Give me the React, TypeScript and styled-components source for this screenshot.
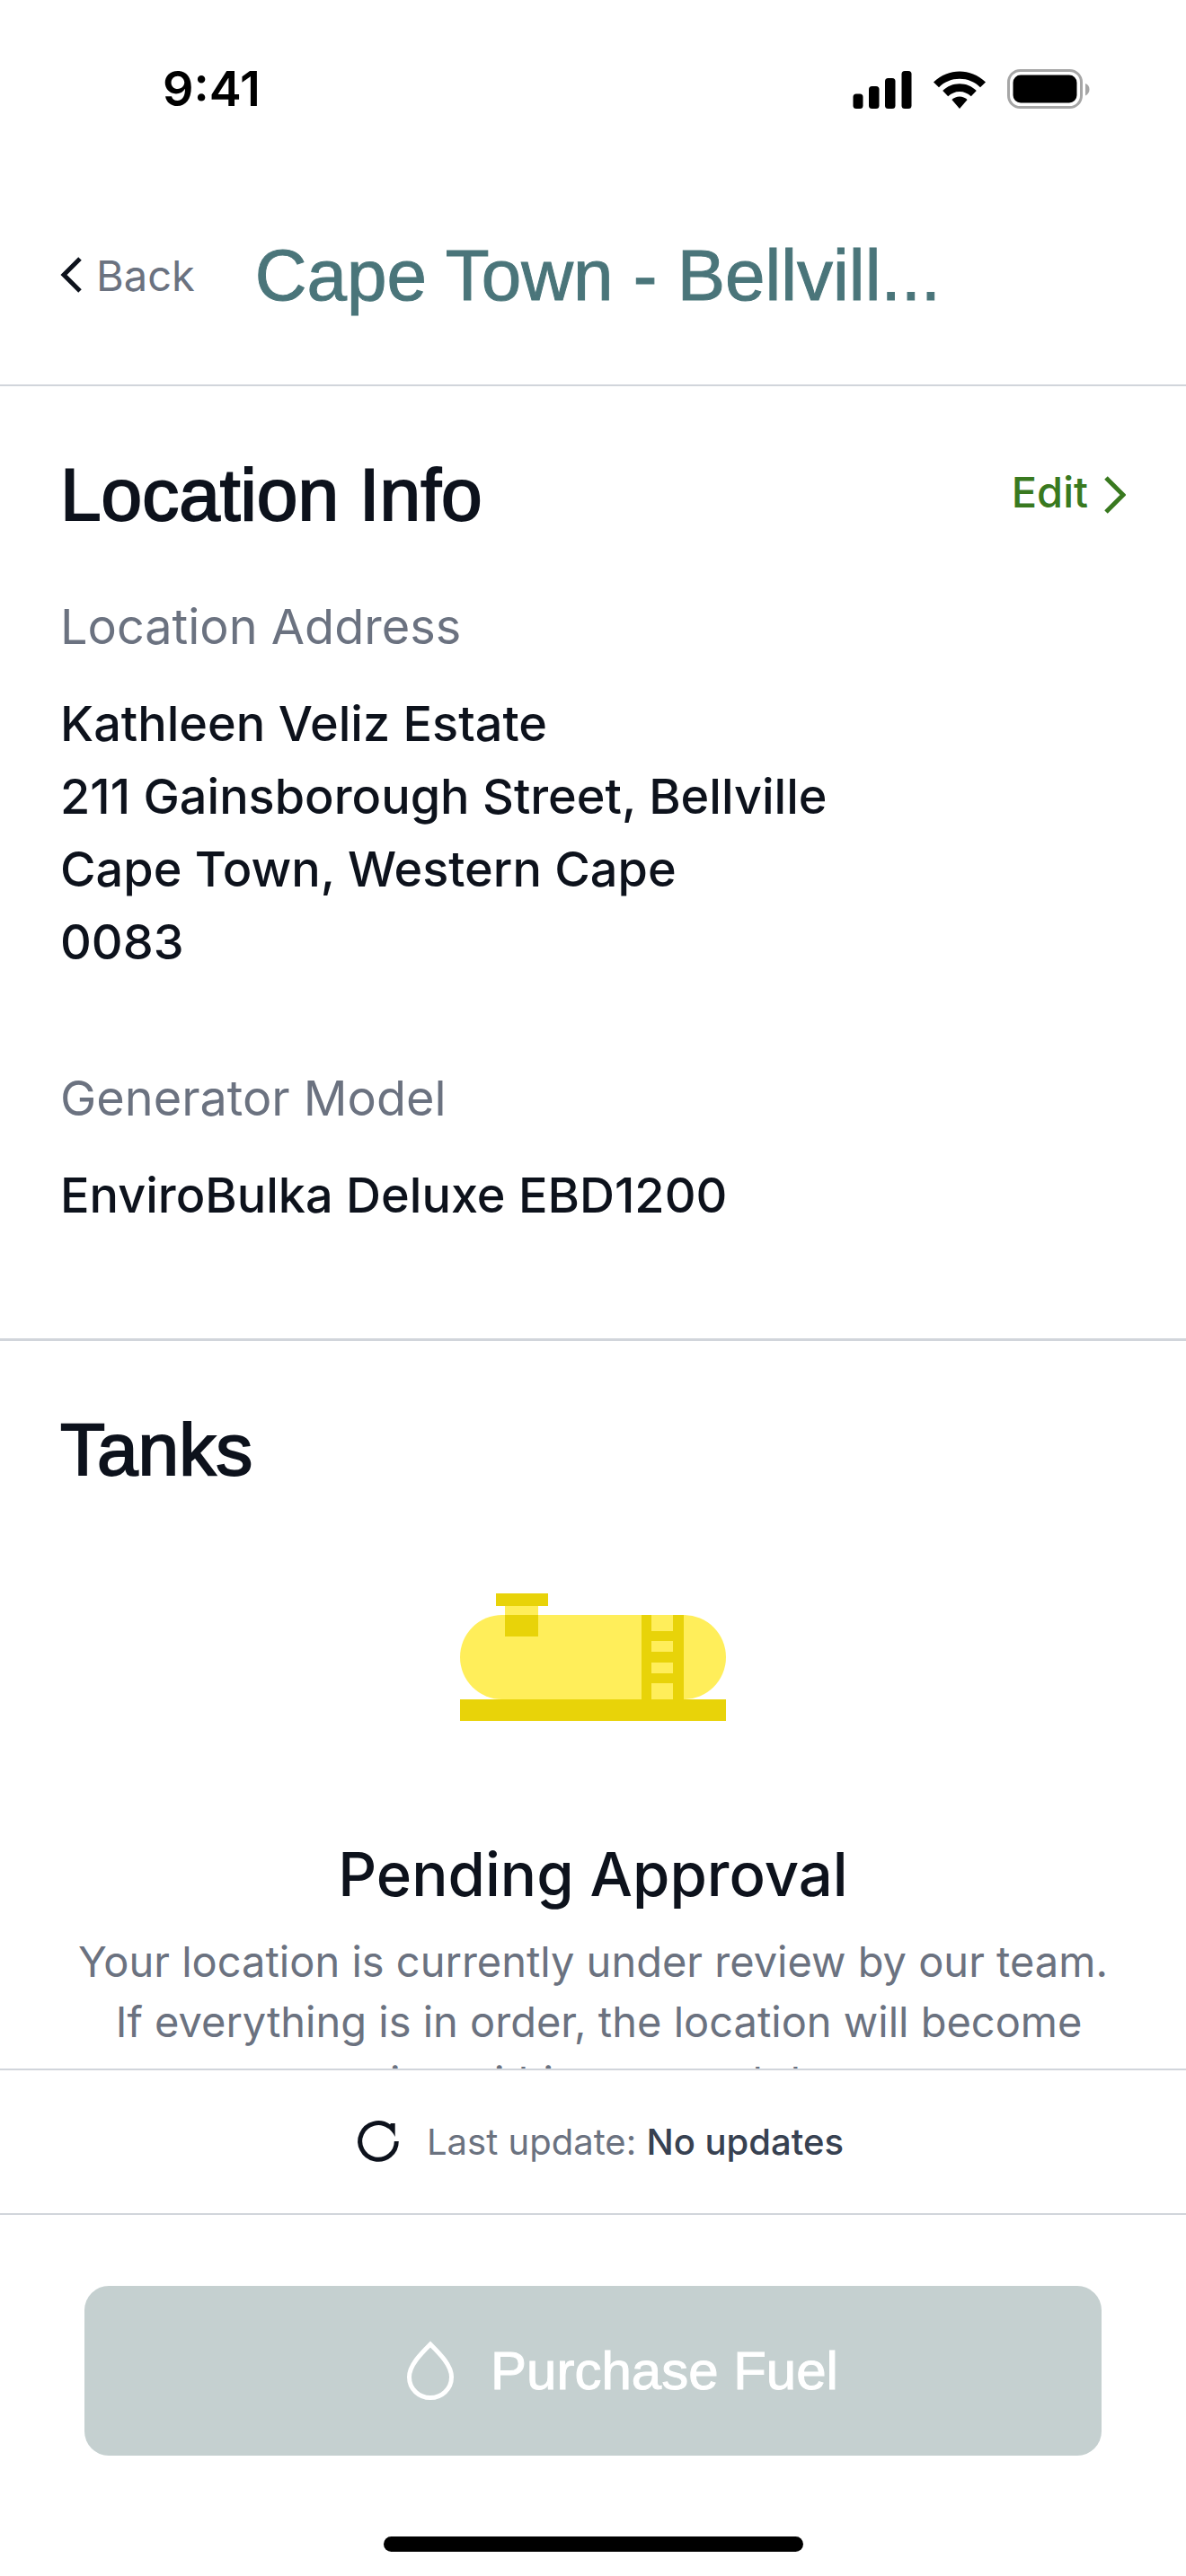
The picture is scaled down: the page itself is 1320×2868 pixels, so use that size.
import React from "react";
import styled, { createGlobalStyle } from "styled-components";

const color = {
  ink: "#0d121c",
  muted: "#6b7280",
  slate: "#374151",
  teal: "#4a757a",
  green: "#39791f",
  line: "#d1d5db",
  disabled: "#c5d0d0",
};

const font = {
  body: `Inter, "Liberation Sans", sans-serif`,
  display: `"Liberation Sans", Arial, sans-serif`,
};

const GlobalStyle = createGlobalStyle`
  *, *::before, *::after { box-sizing: border-box; }
  body { margin: 0; background: #fff; }
  h1, h2, h3, p, dl, dt, dd { margin: 0; font-weight: inherit; }
  button { border: 0; background: none; padding: 0; font: inherit; cursor: pointer; }
`;

const Screen = styled.div`
  display: flex;
  flex-direction: column;
  height: 100vh;
  background: #fff;
  color: ${color.ink};
  font-family: ${font.body};
  font-size: 54px;
  line-height: 81px;
`;

const StatusBar = styled.div`
  display: flex;
  align-items: center;
  justify-content: space-between;
  flex: none;
  padding: 64px 107px 0 181px;
  color: #000;
  font-weight: 600;
  line-height: 70px;
`;

const StatusIcons = styled.div`
  display: flex;
  align-items: center;
  gap: 24px;
`;

const Header = styled.header`
  display: flex;
  align-items: center;
  flex: none;
  gap: 67px;
  padding: 119px 67px 68px;
  border-bottom: 2px solid ${color.line};
`;

const BackLink = styled.a`
  display: flex;
  align-items: center;
  gap: 16px;
  color: ${color.muted};
  font-size: 47px;
  line-height: 67px;
  text-decoration: none;
`;

const Title = styled.h1`
  color: ${color.teal};
  font-family: ${font.display};
  font-size: 80px;
  line-height: 107px;
  white-space: nowrap;
  -webkit-text-stroke: 1px currentColor;
`;

const Content = styled.main`
  flex: 1;
  min-height: 0;
  overflow: hidden;
`;

const Section = styled.section<{ $divided?: boolean }>`
  padding: 67px 67px ${(p) => (p.$divided ? "119px" : "0")};
  border-bottom: ${(p) => (p.$divided ? `3px solid ${color.line}` : "0")};
`;

const SectionHead = styled.div`
  display: flex;
  align-items: center;
  justify-content: space-between;
`;

const SectionTitle = styled.h2`
  font-family: ${font.display};
  font-size: 82px;
  line-height: 107px;
  -webkit-text-stroke: 2px currentColor;
`;

const EditLink = styled.a`
  display: flex;
  align-items: center;
  gap: 18px;
  padding-bottom: 6px;
  color: ${color.green};
  font-size: 47px;
  font-weight: 500;
  line-height: 67px;
  text-decoration: none;
`;

const Details = styled.dl`
  display: grid;
  gap: 93px;
  padding-top: 53px;
`;

const Detail = styled.div`
  display: grid;
  gap: 27px;
`;

const Term = styled.dt`
  color: ${color.muted};
`;

const Value = styled.dd`
  font-weight: 500;
`;

const Empty = styled.div`
  display: flex;
  flex-direction: column;
  align-items: center;
  padding-top: 107px;
  text-align: center;
`;

const EmptyTitle = styled.h3`
  padding-top: 124px;
  font-size: 67px;
  font-weight: 500;
  line-height: 94px;
`;

const EmptyText = styled.p`
  padding-top: 16px;
  color: ${color.muted};
  font-size: 47px;
  line-height: 67px;
`;

const UpdateBar = styled.div`
  display: flex;
  align-items: center;
  justify-content: center;
  flex: none;
  gap: 13px;
  padding: 39px 67px;
  border-top: 2px solid ${color.line};
  border-bottom: 2px solid ${color.line};
  color: ${color.muted};
  font-size: 40px;
  line-height: 60px;
`;

const RefreshButton = styled.button`
  display: flex;
  color: ${color.ink};
`;

const UpdateValue = styled.span`
  color: ${color.slate};
  font-weight: 500;
`;

const Footer = styled.footer`
  display: flex;
  flex-direction: column;
  align-items: center;
  flex: none;
  gap: 90px;
  padding: 79px 94px 27px;
`;

const PurchaseButton = styled.button`
  display: flex;
  align-items: center;
  justify-content: center;
  gap: 40px;
  width: 100%;
  padding: 54px 67px 54px 132px;
  border-radius: 27px;
  background: ${color.disabled};
  color: #fff;
  font-family: ${font.display};
  font-size: 60px;
  line-height: 81px;
  -webkit-text-stroke: 1px currentColor;
`;

const HomeIndicator = styled.div`
  width: 467px;
  height: 17px;
  border-radius: 9px;
  background: #000;
`;

const SignalIcon = () => (
  <svg width="66" height="44" viewBox="0 0 66 44" aria-hidden="true">
    <rect x="0.500" y="27.500" width="11" height="16.500" rx="3.500" />
    <rect x="18" y="19" width="11.500" height="25" rx="3.500" />
    <rect x="36" y="10" width="11.500" height="34" rx="3.500" />
    <rect x="54.500" y="2" width="11" height="42" rx="3.500" />
  </svg>
);

const WifiIcon = () => (
  <svg width="58" height="44" viewBox="0 -2 58 44" aria-hidden="true">
    <path d="M29 0.500C39.500 0.500 49.500 4.500 57.200 11.800L58 12.600L52 18.200C45.800 12.100 37.700 8.800 29 8.800C20.300 8.800 12.200 12.100 6 18.200L0 12.600L0.800 11.800C8.500 4.500 18.500 0.500 29 0.500Z" />
    <path d="M29 14.300C36 14.300 42.700 17 47.800 22L41.800 28.300C38.300 25 33.800 23 29 23C24.200 23 19.700 25 16.200 28.300L10.200 22C15.300 17 22 14.300 29 14.300Z" />
    <path d="M29 28.500C32.200 28.500 35.300 29.700 37.600 32L29 42L20.400 32C22.700 29.700 25.800 28.500 29 28.500Z" />
  </svg>
);

const BatteryIcon = () => (
  <svg width="92" height="44" viewBox="0 0 92 44" aria-hidden="true">
    <rect x="1.500" y="1.500" width="81" height="41" rx="13" fill="none" stroke="#a6a6a6" strokeWidth="3" />
    <rect x="6.500" y="6.500" width="71" height="31" rx="8.500" />
    <path d="M87 16C90 17 91.500 19.500 91.500 22.500C91.500 25.500 90 28 87 29.500Z" fill="#a6a6a6" />
  </svg>
);

const ChevronLeft = () => (
  <svg width="24" height="42" viewBox="0 0 24 42" fill="none" aria-hidden="true">
    <path d="M22 2L4 20L22 38" stroke={color.ink} strokeWidth="5" />
  </svg>
);

const ChevronRight = () => (
  <svg width="24" height="48" viewBox="0 0 24 48" fill="none" aria-hidden="true">
    <path d="M2 8L21 27L2 46" stroke={color.green} strokeWidth="5" />
  </svg>
);

const TankIcon = () => (
  <svg width="296" height="142" viewBox="0 0 296 142" aria-hidden="true">
    <rect x="50" y="14" width="37" height="12" fill="#ffee5a" />
    <rect x="0" y="24" width="296" height="94" rx="47" fill="#ffee5a" />
    <rect x="40" y="0" width="58" height="14" fill="#e8d309" />
    <rect x="50" y="24" width="37" height="24" fill="#e8d309" />
    <rect x="0" y="118" width="296" height="24" fill="#e8d309" />
    <path
      d="M202 24H213V118H202ZM237 24H249V118H237ZM213 42H237V53H213ZM213 65H237V77H213ZM213 89H237V100H213Z"
      fill="#e8d309"
    />
  </svg>
);

const RefreshIcon = () => (
  <svg width="81" height="81" viewBox="-40 -40 81 81" fill="none" aria-hidden="true">
    <path d="M20.300 0A20.300 20.300 0 1 1 12 -16.400" stroke="currentColor" strokeWidth="5" />
    <path d="M12.500 -18L14 -20H18.700V-5C16.500 -9.500 13.500 -13 9.500 -15.500Z" fill="currentColor" />
  </svg>
);

const DropIcon = () => (
  <svg width="54" height="67" viewBox="0 0 54 67" fill="none" aria-hidden="true">
    <path
      d="M27 4C16 15 3.500 27.500 3.500 40.500C3.500 54 14.500 63.500 27 63.500C39.500 63.500 50.500 54 50.500 40.500C50.500 27.500 38 15 27 4Z"
      stroke="currentColor"
      strokeWidth="5"
    />
  </svg>
);

export default function App() {
  return (
    <Screen>
      <GlobalStyle />
      <StatusBar>
        <span>9:41</span>
        <StatusIcons>
          <SignalIcon />
          <WifiIcon />
          <BatteryIcon />
        </StatusIcons>
      </StatusBar>
      <Header>
        <BackLink href="#back">
          <ChevronLeft />
          Back
        </BackLink>
        <Title>Cape Town - Bellvill...</Title>
      </Header>
      <Content>
        <Section $divided>
          <SectionHead>
            <SectionTitle>Location Info</SectionTitle>
            <EditLink href="#edit">
              Edit
              <ChevronRight />
            </EditLink>
          </SectionHead>
          <Details>
            <Detail>
              <Term>Location Address</Term>
              <Value>
                Kathleen Veliz Estate
                <br />
                211 Gainsborough Street, Bellville
                <br />
                Cape Town, Western Cape
                <br />
                0083
              </Value>
            </Detail>
            <Detail>
              <Term>Generator Model</Term>
              <Value>EnviroBulka Deluxe EBD1200</Value>
            </Detail>
          </Details>
        </Section>
        <Section>
          <SectionTitle>Tanks</SectionTitle>
          <Empty>
            <TankIcon />
            <EmptyTitle>Pending Approval</EmptyTitle>
            <EmptyText>
              Your location is currently under review by our team.
              <br />
              &nbsp;If everything is in order, the location will become active within one workday.
            </EmptyText>
          </Empty>
        </Section>
      </Content>
      <UpdateBar>
        <RefreshButton type="button" aria-label="Refresh">
          <RefreshIcon />
        </RefreshButton>
        <span>
          Last update: <UpdateValue>No updates</UpdateValue>
        </span>
      </UpdateBar>
      <Footer>
        <PurchaseButton type="button" disabled>
          <DropIcon />
          Purchase Fuel
        </PurchaseButton>
        <HomeIndicator />
      </Footer>
    </Screen>
  );
}
